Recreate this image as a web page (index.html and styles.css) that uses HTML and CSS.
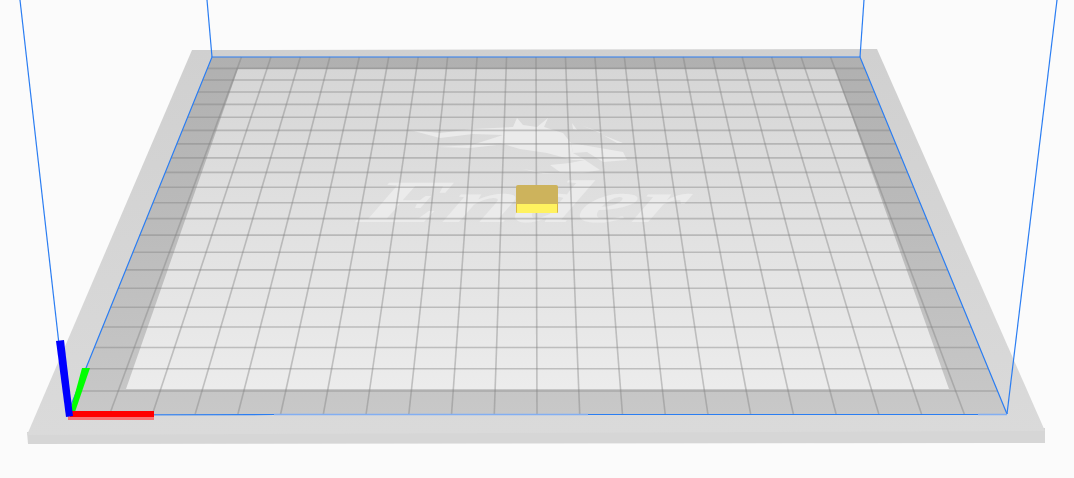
FILE: index.html
```html
<!DOCTYPE html>
<html>
<head>
    <link rel="stylesheet" href="styles.css">
</head>
<body>
    <svg class="scene" width="1074" height="478" viewBox="0 0 1074 478">
        <defs>
            <linearGradient id="plateFace" x1="0" y1="49" x2="0" y2="435" gradientUnits="userSpaceOnUse">
                <stop offset="0" stop-color="#d0d0d0"/>
                <stop offset="1" stop-color="#dadada"/>
            </linearGradient>
            <linearGradient id="bedBand" x1="0" y1="57" x2="0" y2="414" gradientUnits="userSpaceOnUse">
                <stop offset="0" stop-color="#b0b0b0"/>
                <stop offset="1" stop-color="#c8c8c8"/>
            </linearGradient>
            <linearGradient id="bedInner" x1="0" y1="69" x2="0" y2="389" gradientUnits="userSpaceOnUse">
                <stop offset="0" stop-color="#d6d6d6"/>
                <stop offset="1" stop-color="#ececec"/>
            </linearGradient>
        </defs>

        <!-- plate -->
        <polygon class="plate-front" points="27,432 1045,428 1045,443 28,444"/>
        <polygon class="plate-face" points="192,50 877,49 1045,431 27,435"/>

        <!-- heated bed -->
        <polygon class="bed-band" points="212,57 860,57 1007,414 67,415"/>
        <polygon class="bed-inner" points="238,69 835,69 949,389 126,389"/>

        <!-- logo on the bed -->
        <g class="logo">
            <polygon points="440,133 473,129 513,127 517,118 523,125 537,127 548,118 544,127 563,133 571,143 573,153 585,160 573,160 547,153 520,149 500,143 472,145 503,135 473,134 440,138"/>
            <polygon points="410,130 440,133 440,138"/>
            <polygon points="437,147 472,145 497,145 470,148"/>
            <polygon points="571,143 600,148 623,152 627,160 603,162 587,152 573,153"/>
            <polygon points="550,165 570,163 585,160 600,170 583,173 560,172"/>
            <polygon points="523,169 547,173 573,174 543,174"/>
            <polygon points="572,123 577,130 573,129"/>
            <polygon points="583,126 603,133 600,133"/>
            <polygon points="603,135 623,143 617,143"/>
            <text class="logo-text" transform="matrix(2.1 0 -0.5 1 356 222)" x="0" y="0">Ender</text>
        </g>

        <!-- grid, filled in by script.js -->
        <g class="grid" id="grid"></g>

        <!-- build volume outline -->
        <g class="edges">
            <polyline points="20,0 67,415"/>
            <polyline points="207,0 212,57"/>
            <polyline points="864,0 860,57"/>
            <polyline points="1057,0 1007,414"/>
            <polyline points="67,415 212,57 860,57 1007,414"/>
            <polyline points="67,415 274,414.5"/>
            <polyline points="588,414.5 978,414.5"/>
            <polyline class="edges-faint" points="274,414.5 588,414.5"/>
            <polyline class="edges-faint" points="978,414.5 1007,414.5"/>
        </g>

        <!-- model -->
        <rect class="cube-side" x="516" y="202" width="42" height="11" rx="1"/>
        <rect class="cube-front" x="517" y="204" width="40" height="9"/>
        <path class="cube-top" d="M518 185H556Q558 185 558 187V204H516V187Q516 185 518 185Z"/>

        <!-- axes -->
        <polygon class="axis-shadow" points="68,416 154,416 154,420 68,420"/>
        <polygon class="axis-green" points="82,368 90,368 75,412 70,412"/>
        <polygon class="axis-red" points="70,411 154,411 154,417 70,417"/>
        <polygon class="axis-blue" points="56,341 64,340 73,416 66,417"/>
    </svg>

    <script src="script.js"></script>
</body>
</html>
```

FILE: styles.css
```css
body {
    margin: 0;
    background-color: #fbfbfb;
}

.scene {
    display: block;
}

.plate-front {
    fill: #d6d6d6;
}

.plate-face {
    fill: url(#plateFace);
}

.bed-band {
    fill: url(#bedBand);
}

.bed-inner {
    fill: url(#bedInner);
}

.logo {
    fill: #ebebeb;
}

.logo-text {
    font-family: "Liberation Serif", serif;
    font-size: 60px;
    font-weight: bold;
    font-style: italic;
}

.grid line {
    stroke: #808080;
    stroke-opacity: 0.42;
    stroke-width: 1.6;
}

.edges polyline {
    fill: none;
    stroke: #2a7df2;
    stroke-width: 1.2;
}

.edges .edges-faint {
    stroke: #82aef2;
    stroke-width: 1.5;
}

.cube-top {
    fill: #cdb35c;
}

.cube-front {
    fill: #fff25f;
}

.cube-side {
    fill: #d8b840;
}

.axis-blue {
    fill: #0000ff;
}

.axis-green {
    fill: #00ff00;
}

.axis-red {
    fill: #ff0000;
}

.axis-shadow {
    fill: #f87474;
}
```

FILE: script.js
```js
// bed corners on screen
const topY = 57, bottomY = 414;
const topLeft = 212, topRight = 860;
const bottomLeft = 67, bottomRight = 1007;
const cells = 22;

const grid = document.getElementById('grid');

function addLine(x1, y1, x2, y2) {
    const line = document.createElementNS('http://www.w3.org/2000/svg', 'line');
    line.setAttribute('x1', x1);
    line.setAttribute('y1', y1);
    line.setAttribute('x2', x2);
    line.setAttribute('y2', y2);
    grid.appendChild(line);
}

// the far edge is shorter, so rows get closer together going back
const topWidth = topRight - topLeft;
const bottomWidth = bottomRight - bottomLeft;

for (let i = 1; i < cells; i++) {
    const t = i / cells;
    addLine(topLeft + topWidth * t, topY, bottomLeft + bottomWidth * t, bottomY);

    const a = bottomWidth * (1 - t);
    const b = topWidth * t;
    const y = (topY * a + bottomY * b) / (a + b);
    const k = (y - topY) / (bottomY - topY);
    addLine(topLeft + (bottomLeft - topLeft) * k, y, topRight + (bottomRight - topRight) * k, y);
}
```
